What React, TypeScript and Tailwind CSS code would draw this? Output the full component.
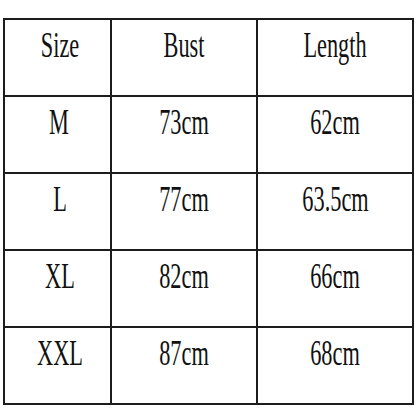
import React from 'react';

const rows = [
  ['Size', 'Bust', 'Length'],
  ['M', '73cm', '62cm'],
  ['L', '77cm', '63.5cm'],
  ['XL', '82cm', '66cm'],
  ['XXL', '87cm', '68cm'],
];

const widths = ['w-[107px] pl-1', 'w-[146px]', 'w-[156px]'];

export default function App() {
  return (
    <div className="w-[416px] h-[416px] bg-white pt-[18px] pl-[3px]">
      {/* Size chart */}
      <div
        className="w-[411px] border-l-2 border-t-2 border-[#1c1c1c] text-[#111]"
        style={{ fontFamily: '"Liberation Serif", "Times New Roman", serif' }}
      >
        {rows.map((row, i) => (
          <div key={i} className="flex">
            {row.map((cell, j) => (
              <div
                key={j}
                className={`${widths[j]} h-[77px] border-r-2 border-b-2 border-[#1c1c1c] flex justify-center pt-[7px]`}
              >
                <span className="inline-block text-[36px] leading-none scale-x-[0.62] whitespace-nowrap">
                  {cell}
                </span>
              </div>
            ))}
          </div>
        ))}
      </div>
    </div>
  );
}
